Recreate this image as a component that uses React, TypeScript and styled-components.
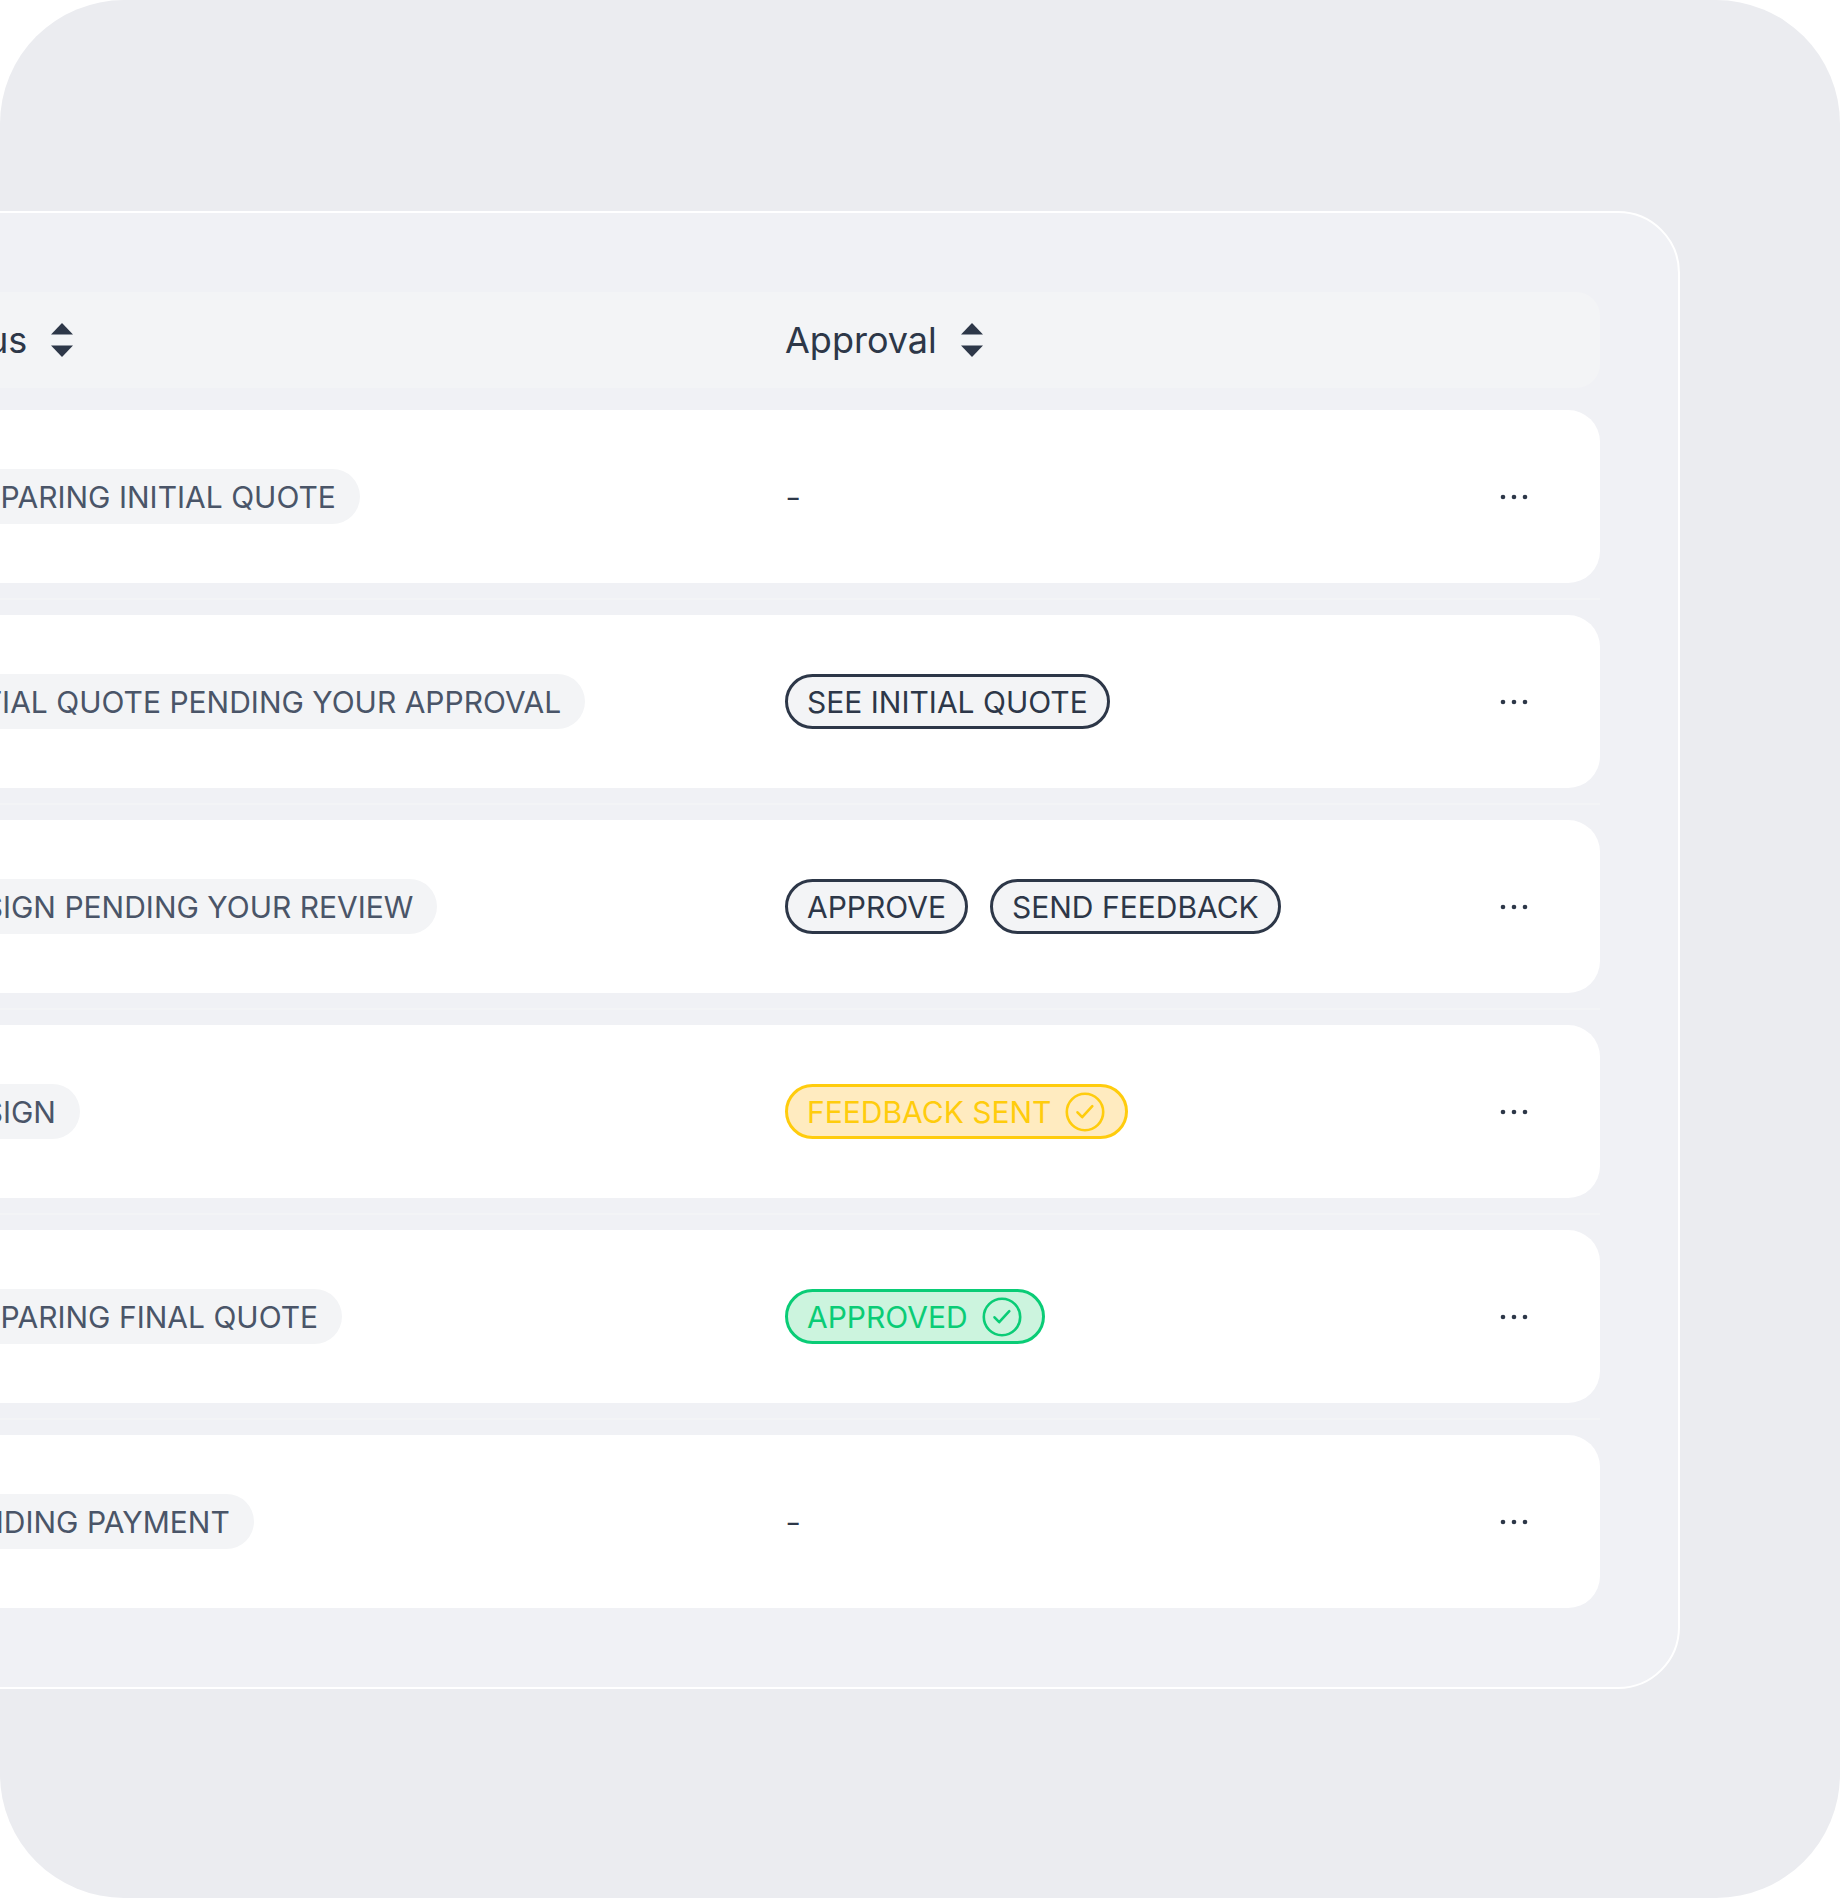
import React from "react";
import styled, { createGlobalStyle } from "styled-components";

const ink = "#2d3748";
const slate = "#4a5568";
const mist = "#f3f4f6";

const GlobalStyle = createGlobalStyle`
  * { box-sizing: border-box; }
  body {
    margin: 0;
    background: #ffffff;
    color: ${ink};
    font-family: Inter, "Liberation Sans", sans-serif;
  }
  button { font: inherit; color: inherit; cursor: pointer; }
`;

const Frame = styled.main`
  overflow: hidden;
  min-height: 100vh;
  padding: 211px 160px 209px 0;
  border-radius: 124px;
  background: #ebecf0;
`;

const Panel = styled.section`
  margin-left: -198px;
  padding: 79px 78px;
  border: 2px solid #ffffff;
  border-radius: 62px;
  background: #f0f1f5;
`;

const Table = styled.table`
  display: flex;
  flex-direction: column;
  gap: 22px;
`;

const Head = styled.thead`
  display: block;
`;

const Body = styled.tbody`
  display: flex;
  flex-direction: column;
  gap: 32px;
`;

const Row = styled.tr`
  position: relative;
  display: grid;
  grid-template-columns: 865fr 681fr 96px;
  align-items: center;
  min-height: 173px;
  padding: 0 38px;
  border-radius: 32px;
  background: #ffffff;

  & + &::before {
    content: "";
    position: absolute;
    top: -17px;
    left: 0;
    right: 0;
    height: 2px;
    background: ${mist};
  }
`;

const HeadRow = styled(Row)`
  min-height: 96px;
  border-radius: 24px;
  background: ${mist};
`;

const HeadCell = styled.th`
  padding: 0;
  font-weight: 400;
  text-align: left;
`;

const SortButton = styled.button`
  display: flex;
  align-items: center;
  gap: 24px;
  padding: 0;
  border: 0;
  background: none;
  font-size: 36px;
  line-height: 48px;
`;

const Cell = styled.td`
  display: flex;
  align-items: center;
  gap: 22px;
  padding: 0;
  font-size: 30px;
  font-weight: 400;
  line-height: 40px;
`;

const Status = styled.span`
  display: flex;
  align-items: center;
  height: 55px;
  padding: 0 24px;
  border-radius: 28px;
  background: ${mist};
  color: ${slate};
  white-space: nowrap;
`;

const Action = styled.button`
  display: flex;
  align-items: center;
  height: 55px;
  padding: 0 19px;
  border: 3px solid ${ink};
  border-radius: 28px;
  background: ${mist};
  white-space: nowrap;
`;

const tones = {
  sent: { line: "#ffcc0d", fill: "#ffebc0" },
  approved: { line: "#0acc76", fill: "#ccf4de" },
};

const Result = styled.span<{ $tone: keyof typeof tones }>`
  display: flex;
  align-items: center;
  gap: 14px;
  height: 55px;
  padding: 0 20px 0 19px;
  border: 3px solid ${(p) => tones[p.$tone].line};
  border-radius: 28px;
  background: ${(p) => tones[p.$tone].fill};
  color: ${(p) => tones[p.$tone].line};
  white-space: nowrap;
`;

const Dash = styled.span`
  font-size: 36px;
  font-weight: 300;
`;

const MoreButton = styled.button`
  display: flex;
  align-items: center;
  justify-content: center;
  width: 96px;
  height: 56px;
  padding: 0;
  border: 0;
  background: none;
`;

const SortIcon = () => (
  <svg width="22" height="34" viewBox="0 0 22 34" fill="currentColor" aria-hidden="true">
    <path d="M11 0 22 11.500H0Z" />
    <path d="M11 34 0 22.500H22Z" />
  </svg>
);

const CheckIcon = () => (
  <svg
    width="40"
    height="40"
    viewBox="0 0 40 40"
    fill="none"
    stroke="currentColor"
    strokeWidth="2.6"
    strokeLinecap="round"
    strokeLinejoin="round"
    aria-hidden="true"
  >
    <circle cx="20" cy="20" r="18.200" />
    <path d="M12.500 20.300 17.200 25.200 27.300 14.200" />
  </svg>
);

const DotsIcon = () => (
  <svg width="28" height="6" viewBox="0 0 28 6" fill="currentColor" aria-hidden="true">
    <circle cx="3" cy="3" r="2.300" />
    <circle cx="14" cy="3" r="2.300" />
    <circle cx="25" cy="3" r="2.300" />
  </svg>
);

type Order = {
  status: string;
  actions?: string[];
  result?: { tone: keyof typeof tones; label: string };
};

const orders: Order[] = [
  { status: "PREPARING INITIAL QUOTE" },
  { status: "INITIAL QUOTE PENDING YOUR APPROVAL", actions: ["SEE INITIAL QUOTE"] },
  { status: "DESIGN PENDING YOUR REVIEW", actions: ["APPROVE", "SEND FEEDBACK"] },
  { status: "DESIGN", result: { tone: "sent", label: "FEEDBACK SENT" } },
  { status: "PREPARING FINAL QUOTE", result: { tone: "approved", label: "APPROVED" } },
  { status: "PENDING PAYMENT" },
];

const Approval = ({ actions, result }: Order) => {
  if (actions) {
    return (
      <>
        {actions.map((label) => (
          <Action key={label} type="button">
            {label}
          </Action>
        ))}
      </>
    );
  }
  if (result) {
    return (
      <Result $tone={result.tone}>
        {result.label}
        <CheckIcon />
      </Result>
    );
  }
  return <Dash>-</Dash>;
};

export default function App() {
  return (
    <>
      <GlobalStyle />
      <Frame>
        <Panel>
          <Table>
            <Head>
              <HeadRow>
                {["Status", "Approval"].map((title) => (
                  <HeadCell key={title} scope="col">
                    <SortButton type="button">
                      {title}
                      <SortIcon />
                    </SortButton>
                  </HeadCell>
                ))}
              </HeadRow>
            </Head>
            <Body>
              {orders.map((order) => (
                <Row key={order.status}>
                  <Cell>
                    <Status>{order.status}</Status>
                  </Cell>
                  <Cell>
                    <Approval {...order} />
                  </Cell>
                  <Cell>
                    <MoreButton type="button" aria-label="More">
                      <DotsIcon />
                    </MoreButton>
                  </Cell>
                </Row>
              ))}
            </Body>
          </Table>
        </Panel>
      </Frame>
    </>
  );
}
